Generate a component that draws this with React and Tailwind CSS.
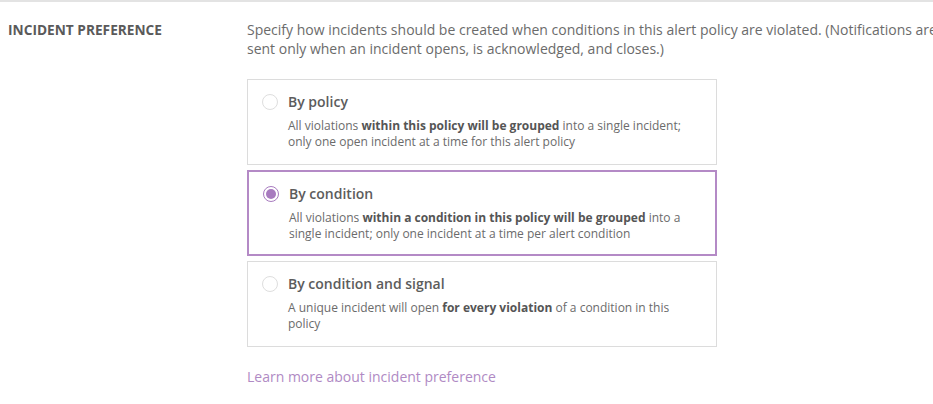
import { useState } from 'react';

const options = [
    {
        id: 'policy',
        title: 'By policy',
        body: (
            <>All violations <b>within this policy will be grouped</b> into a single incident; only one open incident at a time for this alert policy</>
        ),
    },
    {
        id: 'condition',
        title: 'By condition',
        body: (
            <>All violations <b>within a condition in this policy will be grouped</b> into a single incident; only one incident at a time per alert condition</>
        ),
    },
    {
        id: 'signal',
        title: 'By condition and signal',
        body: (
            <>A unique incident will open <b>for every violation</b> of a condition in this policy</>
        ),
    },
];

export default function App() {
    const [selected, setSelected] = useState('condition');

    return (
        <div className="min-h-screen bg-white border-t-2 border-[#e3e3e3] font-['Open_Sans',sans-serif] text-[#666]">
            <div className="flex pt-[18px]">
                {/* Label */}
                <div className="w-[247px] shrink-0 pl-2">
                    <h3 className="text-[13.7px] font-bold uppercase text-[#5a5a5a] leading-5">Incident preference</h3>
                </div>

                {/* Options */}
                <div className="flex-1 min-w-0">
                    <p className="text-[14px] leading-[19px] text-[#6b6b6b] whitespace-nowrap">
                        Specify how incidents should be created when conditions in this alert policy are violated. (Notifications are<br />
                        sent only when an incident opens, is acknowledged, and closes.)
                    </p>

                    <div className="w-[470px] mt-[21px] flex flex-col gap-[5px]">
                        {options.map(opt => {
                            const active = selected === opt.id;
                            return (
                                <label
                                    key={opt.id}
                                    onClick={() => setSelected(opt.id)}
                                    className={`flex gap-[10px] h-[86px] pl-[14px] pr-4 pt-[12px] cursor-pointer ${active ? 'border-2 border-[#b48ac6] pl-[13px] pt-[11px]' : 'border border-[#dcdcdc]'}`}
                                >
                                    <span className={`mt-[2px] w-4 h-4 shrink-0 rounded-full flex items-center justify-center ${active ? 'border border-[#a87bbf]' : 'border border-[#dedede]'}`}>
                                        {active && <span className="w-[10px] h-[10px] rounded-full bg-[#a87bbf]"></span>}
                                    </span>
                                    <div>
                                        <div className="text-[14px] leading-5 font-semibold text-[#5c5c5c]">{opt.title}</div>
                                        <p className="mt-[6px] text-[12px] leading-4 text-[#6b6b6b] [&_b]:font-bold [&_b]:text-[#555]">{opt.body}</p>
                                    </div>
                                </label>
                            );
                        })}
                    </div>

                    <a href="#" className="inline-block mt-[20px] text-[14px] leading-5 text-[#b08ac4]">Learn more about incident preference</a>
                </div>
            </div>
        </div>
    );
}
